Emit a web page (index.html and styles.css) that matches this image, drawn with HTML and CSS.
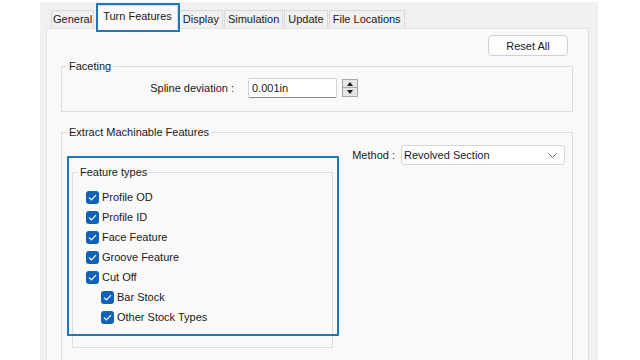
FILE: index.html
```html
<!DOCTYPE html>
<html lang="en">
<head>
<meta charset="UTF-8">
<meta name="viewport" content="width=device-width, initial-scale=1.0">
<title>Options - Turn Features</title>
<link rel="stylesheet" href="styles.css">
</head>

<body>
<div class="window">
    <div class="tabs">
        <div class="tab first">General</div>
        <div class="tab active">Turn Features</div>
        <div class="tab">Display</div>
        <div class="tab">Simulation</div>
        <div class="tab">Update</div>
        <div class="tab">File Locations</div>
    </div>

    <div class="panel">
        <div class="toolbar">
            <button class="btn">Reset All</button>
        </div>

        <fieldset class="group faceting">
            <legend>Faceting</legend>
            <div class="field-row">
                <label class="field-label">Spline deviation :</label>
                <input class="text-input" type="text" value="0.001in">
                <div class="spinner">
                    <span class="spin up"></span>
                    <span class="spin down"></span>
                </div>
            </div>
        </fieldset>

        <fieldset class="group extract">
            <legend>Extract Machinable Features</legend>
            <div class="extract-body">
                <fieldset class="group types">
                    <legend>Feature types</legend>
                    <div class="check-list">
                        <div class="check-row"><span class="box"><svg width="9" height="7" viewBox="0 0 9 7"><path d="M1 3.6 L3.4 5.8 L8 1.2" fill="none" stroke="#fff" stroke-width="1.2"/></svg></span>Profile OD</div>
                        <div class="check-row"><span class="box"><svg width="9" height="7" viewBox="0 0 9 7"><path d="M1 3.6 L3.4 5.8 L8 1.2" fill="none" stroke="#fff" stroke-width="1.2"/></svg></span>Profile ID</div>
                        <div class="check-row"><span class="box"><svg width="9" height="7" viewBox="0 0 9 7"><path d="M1 3.6 L3.4 5.8 L8 1.2" fill="none" stroke="#fff" stroke-width="1.2"/></svg></span>Face Feature</div>
                        <div class="check-row"><span class="box"><svg width="9" height="7" viewBox="0 0 9 7"><path d="M1 3.6 L3.4 5.8 L8 1.2" fill="none" stroke="#fff" stroke-width="1.2"/></svg></span>Groove Feature</div>
                        <div class="check-row"><span class="box"><svg width="9" height="7" viewBox="0 0 9 7"><path d="M1 3.6 L3.4 5.8 L8 1.2" fill="none" stroke="#fff" stroke-width="1.2"/></svg></span>Cut Off</div>
                        <div class="check-row sub"><span class="box"><svg width="9" height="7" viewBox="0 0 9 7"><path d="M1 3.6 L3.4 5.8 L8 1.2" fill="none" stroke="#fff" stroke-width="1.2"/></svg></span>Bar Stock</div>
                        <div class="check-row sub"><span class="box"><svg width="9" height="7" viewBox="0 0 9 7"><path d="M1 3.6 L3.4 5.8 L8 1.2" fill="none" stroke="#fff" stroke-width="1.2"/></svg></span>Other Stock Types</div>
                    </div>
                </fieldset>

                <div class="method">
                    <label class="method-label">Method :</label>
                    <div class="select">
                        <span>Revolved Section</span>
                        <svg width="9" height="5" viewBox="0 0 9 5"><path d="M0.5 0.5 L4.5 4.5 L8.5 0.5" fill="none" stroke="#6a6a6a" stroke-width="1"/></svg>
                    </div>
                </div>
            </div>
        </fieldset>
    </div>

    <!-- callout boxes drawn over the dialog -->
    <div class="callout callout-tab"></div>
    <div class="callout callout-types"></div>
</div>
</body>
</html>
```

FILE: styles.css
```css
body {
    margin: 0;
    background: #fff;
    font-family: "Liberation Sans", Arial, sans-serif;
    font-size: 11px;
    color: #1a1a1a;
}
.window {
    position: relative;
    margin: 2px 0 0 40px;
    width: 558px;
    height: 358px;
    background: #f0f0f0;
    overflow: hidden;
}
.tabs {
    position: relative;
    z-index: 1;
    display: flex;
    align-items: flex-end;
    height: 27px;
    margin-bottom: -1px;
    padding-left: 11px;
}
.tab {
    height: 18px;
    margin: 0 0 1px 1px;
    padding: 0 3px;
    line-height: 17px;
    border: 1px solid #d9d9d9;
    border-bottom: none;
    background: #f0f0f0;
    box-sizing: border-box;
}
.tab.first {
    margin-left: 0;
    padding: 0 1px;
}
.tab.active {
    height: 24px;
    margin: 0 0 0 3px;
    padding: 0 5px;
    line-height: 21px;
    background: #f9f9f9;
}
.panel {
    margin-left: 6px;
    width: 543px;
    height: 340px;
    box-sizing: border-box;
    border: 1px solid #e2e2e2;
    background: #f9f9f9;
}
.toolbar {
    display: flex;
    justify-content: flex-end;
    padding: 6px 20px 0 0;
}
.btn {
    width: 80px;
    height: 21px;
    padding: 0;
    border: 1px solid #d0d0d0;
    border-radius: 4px;
    background: #fdfdfd;
    font: inherit;
    color: #1a1a1a;
}
.group {
    margin: 0;
    padding: 0;
    min-width: 0;
    border: 1px solid #dcdcdc;
}
.group legend {
    margin-left: 5px;
    padding: 0 2px;
    line-height: 14px;
}
.faceting {
    margin: 3px 15px 0 14px;
    padding: 5px 0 13px;
}
.field-row {
    display: flex;
    align-items: center;
    height: 20px;
}
.field-label {
    width: 172px;
    margin-right: 14px;
    text-align: right;
}
.text-input {
    width: 89px;
    height: 20px;
    box-sizing: border-box;
    padding: 0 3px;
    border: 1px solid #d4d4d4;
    border-bottom-color: #8a8a8a;
    border-radius: 2px;
    background: #fff;
    font: inherit;
    color: #1a1a1a;
}
.spinner {
    display: flex;
    flex-direction: column;
    margin-left: 5px;
}
.spin {
    position: relative;
    width: 16px;
    height: 9px;
    box-sizing: border-box;
    border: 1px solid #a8a8a8;
    background: #e6e6e6;
}
.spin + .spin {
    border-top: none;
}
.spin::after {
    content: "";
    position: absolute;
    left: 4px;
    top: 2px;
    border-left: 3.5px solid transparent;
    border-right: 3.5px solid transparent;
}
.spin.up::after {
    border-bottom: 4px solid #1a1a1a;
}
.spin.down::after {
    border-top: 4px solid #1a1a1a;
}
.extract {
    margin: 13px 15px 0 14px;
    height: 260px;
    box-sizing: border-box;
}
.extract-body {
    display: flex;
    align-items: flex-start;
    padding-top: 6px;
}
.types {
    width: 261px;
    box-sizing: border-box;
    margin: 20px 0 0 10px;
    padding: 8px 0 20px;
}
.check-list {
    padding-left: 13px;
}
.check-row {
    display: flex;
    align-items: center;
    gap: 3px;
    height: 20px;
}
.check-row.sub {
    padding-left: 15px;
}
.box {
    display: flex;
    align-items: center;
    justify-content: center;
    width: 13px;
    height: 13px;
    border-radius: 3px;
    background: #0f62b6;
}
.method {
    display: flex;
    align-items: center;
    margin: 0 7px 0 auto;
}
.method-label {
    margin-right: 6px;
}
.select {
    display: flex;
    align-items: center;
    justify-content: space-between;
    width: 164px;
    height: 20px;
    box-sizing: border-box;
    padding: 0 7px 0 2px;
    border: 1px solid #d5d5d5;
    border-radius: 3px;
    background: #fff;
}
.callout {
    position: absolute;
    z-index: 2;
    box-sizing: border-box;
    border: 2px solid #1f77b4;
}
.callout-tab {
    left: 56px;
    top: 1px;
    width: 84px;
    height: 29px;
}
.callout-types {
    left: 27px;
    top: 154px;
    width: 272px;
    height: 180px;
}
```
